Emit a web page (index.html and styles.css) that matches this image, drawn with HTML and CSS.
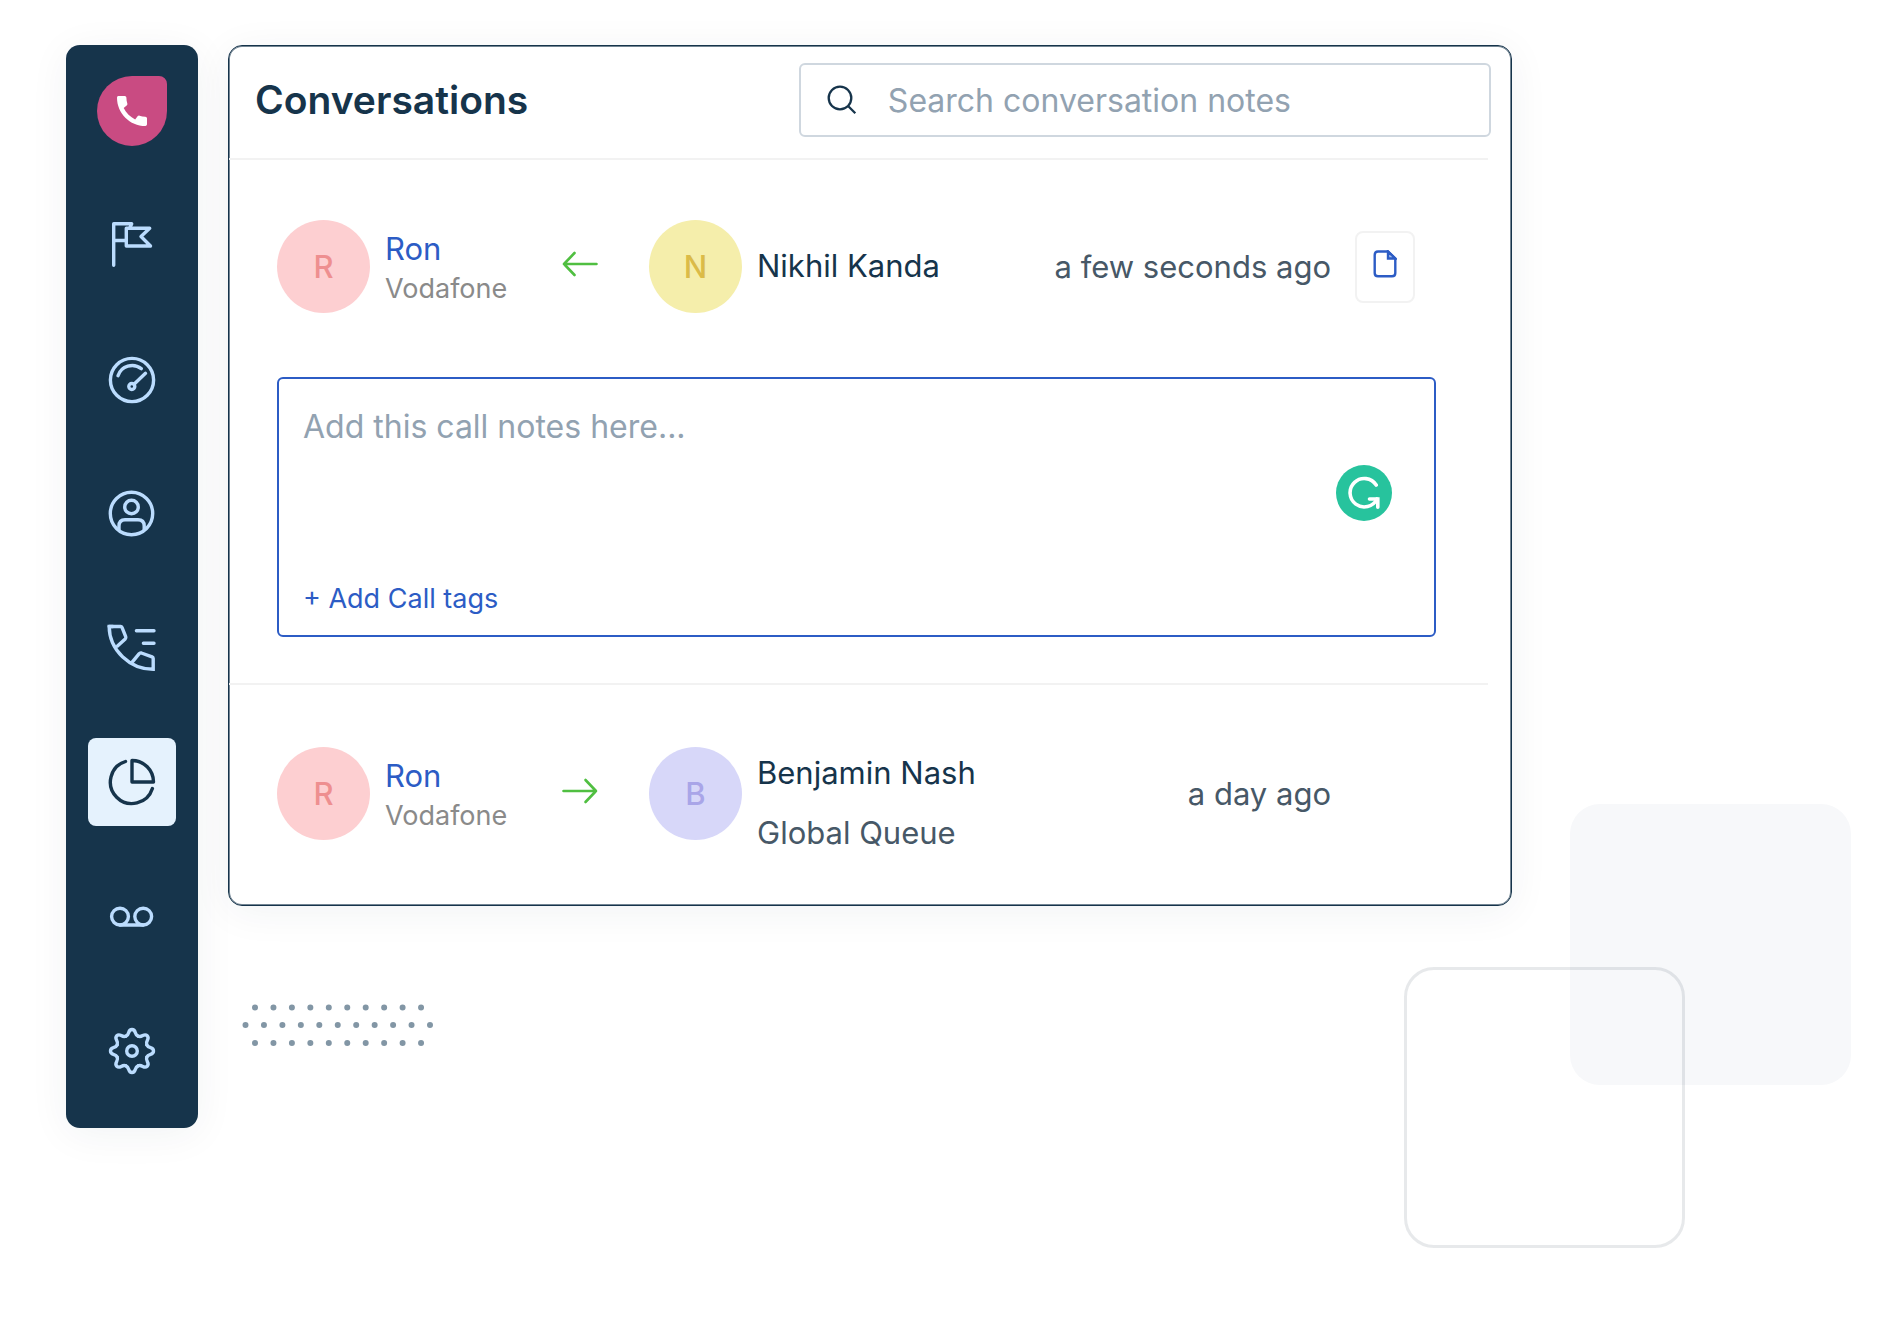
FILE: index.html
```
<!DOCTYPE html>
<html lang="en">
<head>
    <meta charset="UTF-8">
    <meta name="viewport" content="width=device-width, initial-scale=1.0">
    <title>Conversations</title>
    <link rel="stylesheet" href="styles.css">
</head>
<body>
    <div class="square square-filled"></div>
    <div class="square square-outline"></div>

    <div class="page">
        <nav class="sidebar">
            <a class="nav-item" href="#" aria-label="Home">
                <span class="logo">
                    <svg width="40" height="40" viewBox="0 0 24 24" fill="#fff">
                        <path d="M20.01 15.38c-1.23 0-2.42-.2-3.53-.56-.35-.12-.74-.03-1.01.24l-1.57 1.97c-2.83-1.35-5.48-3.9-6.89-6.83l1.95-1.66c.27-.28.35-.67.24-1.02-.37-1.11-.56-2.3-.56-3.53 0-.54-.45-.99-.99-.99H4.19C3.65 3 3 3.24 3 3.99 3 13.28 10.73 21 20.01 21c.71 0 .99-.63.99-1.18v-3.45c0-.54-.45-.99-.99-.99z"/>
                    </svg>
                </span>
            </a>
            <a class="nav-item" href="#" aria-label="Campaigns">
                <svg class="icon" viewBox="0 0 48 48">
                    <path d="M5.7 44.3V2.7H23.7L22 6.5M5.7 19.5H18"/>
                    <path d="M18.3 7.3H41.7L33 15.5L42.5 25H18.3Z"/>
                </svg>
            </a>
            <a class="nav-item" href="#" aria-label="Dashboard">
                <svg class="icon" viewBox="0 0 48 48">
                    <circle cx="24" cy="24" r="21.6"/>
                    <path d="M10 19.7A15 15 0 0 1 33.3 12.6M26 28.2L37.5 17.3"/>
                    <circle cx="23.8" cy="30.5" r="3"/>
                </svg>
            </a>
            <a class="nav-item" href="#" aria-label="Contacts">
                <svg class="icon" viewBox="0 0 48 48">
                    <circle cx="23.5" cy="23.5" r="21.2"/>
                    <circle cx="23.5" cy="17" r="6.8"/>
                    <path d="M11 39.5V36Q11 29.7 17 29.7H30Q36.2 29.7 36.2 36V39.5"/>
                </svg>
            </a>
            <a class="nav-item" href="#" aria-label="Call log">
                <svg class="icon icon-call" viewBox="0 0 48 48">
                    <path d="M1.2 2.5H12.6Q13.6 2.5 14 3.4L17.7 12.6Q18.2 14 17.2 15L9.5 22"/>
                    <path d="M24 38.3L31 29.8Q32 28.6 33.4 29L44 32.8Q45.2 33.4 45.2 34.6V45.3C22 45.3 1.2 26 1.2 2.5H5"/>
                    <path d="M28.4 6.8H46M35.4 19.2H46"/>
                </svg>
            </a>
            <a class="nav-item active" href="#" aria-label="Conversations">
                <svg class="icon" viewBox="0 0 48 48">
                    <path d="M24 24V2.5A21.5 21.5 0 0 1 45.5 24Z"/>
                    <path d="M17.5 3.5A21.5 21.5 0 1 0 44.4 30.5"/>
                </svg>
            </a>
            <a class="nav-item" href="#" aria-label="Voicemail">
                <svg class="icon" viewBox="0 0 48 48">
                    <circle cx="12" cy="23.6" r="8.4"/>
                    <circle cx="35.2" cy="23.6" r="8.4"/>
                    <path d="M12 32H35.2"/>
                </svg>
            </a>
            <a class="nav-item" href="#" aria-label="Settings">
                <svg class="icon" viewBox="-24 -24 48 48">
                    <defs>
                        <path id="tooth" d="M6.1 -14.8C1.9 -16.5 4.6 -21.5 0 -21.5C-4.6 -21.5 -1.9 -16.5 -6.1 -14.8"/>
                    </defs>
                    <use href="#tooth"/>
                    <use href="#tooth" transform="rotate(45)"/>
                    <use href="#tooth" transform="rotate(90)"/>
                    <use href="#tooth" transform="rotate(135)"/>
                    <use href="#tooth" transform="rotate(180)"/>
                    <use href="#tooth" transform="rotate(225)"/>
                    <use href="#tooth" transform="rotate(270)"/>
                    <use href="#tooth" transform="rotate(315)"/>
                    <circle cx="0" cy="0" r="5.3"/>
                </svg>
            </a>
        </nav>

        <main class="content">
            <section class="card">
                <header class="card-header">
                    <h1>Conversations</h1>
                    <label class="search">
                        <svg width="30" height="30" viewBox="0 0 30 30" fill="none" stroke="#16344b" stroke-width="2.3">
                            <circle cx="13" cy="13" r="11.3"/>
                            <path d="M21.3 21.3L28.3 28.3"/>
                        </svg>
                        <input type="text" name="search" placeholder="Search conversation notes" aria-label="Search conversation notes">
                    </label>
                </header>
                <hr>

                <div class="row row-first">
                    <div class="person">
                        <span class="avatar red">R</span>
                        <div class="caller-info">
                            <a class="caller" href="#">Ron</a>
                            <p class="provider">Vodafone</p>
                        </div>
                    </div>
                    <svg class="arrow" width="36" height="26" viewBox="0 0 36 26">
                        <path d="M12.5 2L2 13L12.5 24M2 13H34.5"/>
                    </svg>
                    <div class="person">
                        <span class="avatar yellow">N</span>
                        <p class="agent">Nikhil Kanda</p>
                    </div>
                    <span class="time">a few seconds ago</span>
                    <button type="button" class="note-button" aria-label="Call notes">
                        <svg width="24" height="28" viewBox="0 0 24 28" fill="none" stroke="#2c5cc5" stroke-width="2.4">
                            <path d="M5 1.5H15L22.3 8.5V23Q22.3 26.3 19 26.3H5Q1.7 26.3 1.7 23V5Q1.7 1.5 5 1.5Z"/>
                            <path d="M15 1.5V8.5H22.3Z" fill="#a9c0ee"/>
                        </svg>
                    </button>
                </div>

                <div class="note-box">
                    <textarea name="notes" placeholder="Add this call notes here..." aria-label="Call notes"></textarea>
                    <a class="add-tags" href="#">+ Add Call tags</a>
                    <svg class="grammar" viewBox="0 0 56 56">
                        <circle cx="28" cy="28" r="28" fill="#27c39d"/>
                        <path d="M40.2 20A14.2 14.2 0 1 0 41 34" fill="none" stroke="#fff" stroke-width="3.6" stroke-linecap="round"/>
                        <path d="M33.5 34H41.8V42.3" fill="none" stroke="#fff" stroke-width="3.6" stroke-linecap="round"/>
                    </svg>
                </div>
                <hr>

                <div class="row row-last">
                    <div class="person">
                        <span class="avatar red">R</span>
                        <div class="caller-info">
                            <a class="caller" href="#">Ron</a>
                            <p class="provider">Vodafone</p>
                        </div>
                    </div>
                    <svg class="arrow" width="36" height="26" viewBox="0 0 36 26">
                        <path d="M23.5 2L34 13L23.5 24M34 13H1.5"/>
                    </svg>
                    <div class="person">
                        <span class="avatar purple">B</span>
                        <div class="agent-queue">
                            <p class="agent">Benjamin Nash</p>
                            <p class="queue">Global Queue</p>
                        </div>
                    </div>
                    <span class="time">a day ago</span>
                </div>
            </section>

            <svg class="dots" width="192" height="42" viewBox="0 0 192 42" fill="none" stroke="#8296a5" stroke-width="6" stroke-linecap="round">
                <path d="M13 3.5H180" stroke-dasharray="0 18.45"/>
                <path d="M3.5 21H189" stroke-dasharray="0 18.45"/>
                <path d="M13 39H180" stroke-dasharray="0 18.45"/>
            </svg>
        </main>
    </div>
</body>
</html>
```
FILE: styles.css
```
* {
    box-sizing: border-box;
}

body {
    margin: 0;
    position: relative;
    min-height: 100vh;
    background-color: #fff;
    color: #16344b;
    font-family: Inter, "Liberation Sans", sans-serif;
    font-size: 31px;
}

h1, p {
    margin: 0;
}

a {
    text-decoration: none;
}

hr {
    margin: 0 23px 0 0;
    border: none;
    border-top: 2px solid #f2f2f2;
}

.page {
    position: relative;
    display: flex;
    gap: 30px;
    padding: 45px 381px 0 66px;
}

/* background squares */
.square {
    position: absolute;
    width: 281px;
    height: 281px;
    border-radius: 30px;
}

.square-filled {
    top: 804px;
    right: 42px;
    background-color: #f7f8fa;
}

.square-outline {
    top: 967px;
    right: 208px;
    border: 3px solid rgba(22, 42, 60, 0.1);
}

/* sidebar */
.sidebar {
    display: flex;
    flex-direction: column;
    align-items: center;
    justify-content: space-between;
    flex-shrink: 0;
    width: 132px;
    min-height: calc(100vh - 255px);
    padding: 22px 0 33px;
    background-color: #16344b;
    border-radius: 14px;
    box-shadow: 0 6px 40px rgba(22, 52, 75, 0.06);
}

.nav-item {
    display: flex;
    align-items: center;
    justify-content: center;
    width: 88px;
    height: 88px;
    border-radius: 8px;
    color: #bbdcfe;
}

.nav-item.active {
    background-color: #e5f2fd;
    color: #16344b;
}

.logo {
    display: flex;
    align-items: center;
    justify-content: center;
    width: 70px;
    height: 70px;
    background-color: #c94b82;
    border-radius: 50% 8px 50% 50%;
}

.icon {
    width: 48px;
    height: 48px;
    fill: none;
    stroke: currentColor;
    stroke-width: 3.4;
    stroke-linecap: round;
    stroke-linejoin: round;
}

.icon-call {
    overflow: visible;
    stroke-linejoin: miter;
}

/* card */
.content {
    flex: 1;
    min-width: 0;
}

.card {
    background-color: #fff;
    border: 1px solid #16344b;
    border-radius: 14px;
    box-shadow: inset 0 0 0 1px rgba(22, 52, 75, 0.6), 0 6px 40px rgba(22, 52, 75, 0.06);
}

.card-header {
    display: flex;
    align-items: center;
    justify-content: space-between;
    padding: 17px 20px 21px 26px;
}

h1 {
    font-size: 39px;
    font-weight: 600;
    line-height: 48px;
}

.search {
    display: flex;
    align-items: center;
    gap: 31px;
    width: 56%;
    height: 74px;
    padding: 0 26px;
    border: 2px solid #cfd7df;
    border-radius: 6px;
}

.search input {
    flex: 1;
    min-width: 0;
    padding: 0;
    border: none;
    outline: none;
    background: none;
    color: #16344b;
    font: inherit;
    font-size: 32px;
}

input::placeholder, textarea::placeholder {
    color: #92a2b1;
    opacity: 1;
}

.row {
    display: grid;
    grid-template-columns: 285px 87px 1fr auto 60px;
    align-items: center;
    min-height: 140px;
    margin: 0 96px 0 48px;
}

.row-first {
    margin-top: 36px;
    margin-bottom: 41px;
}

.row-last {
    margin-top: 38px;
    margin-bottom: 42px;
}

.person {
    display: flex;
    align-items: center;
    gap: 15px;
}

.avatar {
    display: flex;
    align-items: center;
    justify-content: center;
    flex-shrink: 0;
    width: 93px;
    height: 93px;
    border-radius: 50%;
    font-weight: 500;
}

.red {
    background-color: #fdcfd1;
    color: #ee8f90;
}

.yellow {
    background-color: #f5eeab;
    color: #dbbb48;
}

.purple {
    background-color: #d7d7f9;
    color: #a9a5e8;
}

.caller-info {
    padding-top: 6px;
}

.caller {
    display: block;
    color: #2c5cc5;
    line-height: 40px;
}

.provider {
    color: #8a8a8a;
    font-size: 27px;
    line-height: 40px;
}

.arrow {
    margin-bottom: 4px;
    fill: none;
    stroke: #50bf41;
    stroke-width: 2.6;
    stroke-linecap: round;
    stroke-linejoin: round;
}

.agent, .queue {
    line-height: 60px;
    white-space: nowrap;
}

.agent-queue {
    padding-top: 20px;
}

.queue, .time {
    color: #475867;
}

.time {
    margin-right: 24px;
    white-space: nowrap;
}

.note-button {
    width: 60px;
    height: 72px;
    margin-top: 2px;
    padding: 0 0 4px;
    background-color: #fff;
    border: 2px solid #f2f2f2;
    border-radius: 8px;
    cursor: pointer;
}

.note-box {
    position: relative;
    display: flex;
    flex-direction: column;
    align-items: flex-start;
    height: 260px;
    margin: 0 75px 46px 48px;
    padding: 28px 24px 16px;
    border: 2px solid #2c5cc5;
    border-radius: 6px;
}

.note-box textarea {
    flex: 1;
    width: 100%;
    padding: 0;
    border: none;
    outline: none;
    resize: none;
    color: #16344b;
    font: inherit;
    font-size: 32px;
    line-height: 40px;
}

.add-tags {
    color: #2c5cc5;
    font-size: 27px;
    line-height: 40px;
}

.grammar {
    position: absolute;
    top: 86px;
    right: 42px;
    width: 56px;
    height: 56px;
}

.dots {
    display: block;
    margin: 98px 0 0 14px;
}
```
